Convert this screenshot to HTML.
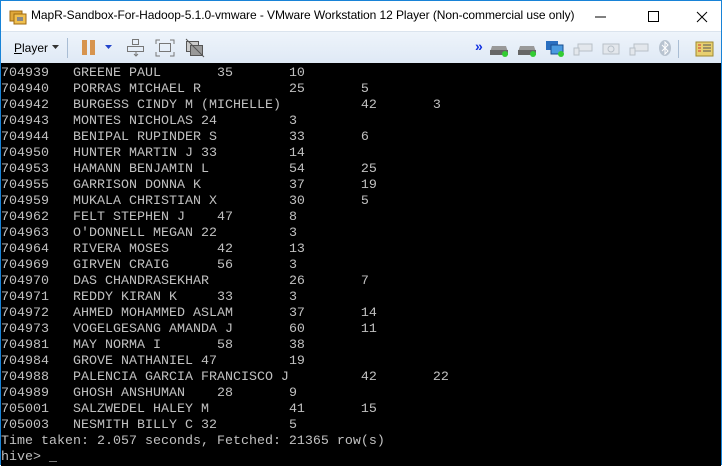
<!DOCTYPE html>
<html><head><meta charset="utf-8">
<style>
html,body{margin:0;padding:0;width:722px;height:466px;overflow:hidden;background:#fff;font-family:"Liberation Sans",sans-serif;}
.win{position:absolute;left:0;top:0;width:720px;height:465px;border:1px solid #1883d7;border-top:none;border-bottom:none;}
.title{position:absolute;left:0;top:0;width:722px;height:31px;background:#fff;border-top:1px solid #1883d7;box-sizing:border-box;}
.title .t{position:absolute;left:31px;top:7px;font-size:12px;letter-spacing:-0.07px;color:#000;}
.tb{position:absolute;left:1px;top:31px;width:720px;height:32px;background:linear-gradient(#eef4fb,#dfe9f5);border-top:1px solid #dbe4ee;box-sizing:border-box;}
.con{position:absolute;left:1px;top:63px;width:720px;height:403px;background:#000;}
pre{margin:0;position:absolute;left:0;top:3px;font-family:"Liberation Mono",monospace;font-size:13.333px;line-height:16px;color:#c0c0c0;tab-size:9;-moz-tab-size:9;}
.ic{position:absolute;}
</style></head><body>
<div class="title">
  <svg class="ic" style="left:9px;top:8px" width="18" height="16" viewBox="0 0 18 16">
    <rect x="1" y="2" width="12" height="10" fill="#e0a83a" stroke="#a06a10"/>
    <rect x="5" y="5" width="12" height="10" fill="#f0c050" stroke="#a06a10"/>
    <rect x="8" y="8" width="6" height="4" fill="#888"/>
  </svg>
  <div class="t">MapR-Sandbox-For-Hadoop-5.1.0-vmware - VMware Workstation 12 Player (Non-commercial use only)</div>
  <svg class="ic" style="left:595px;top:9px" width="120" height="14" viewBox="0 0 120 14">
    <line x1="0" y1="7" x2="11" y2="7" stroke="#000"/>
    <rect x="53.5" y="1.5" width="10" height="10" fill="none" stroke="#000"/>
    <path d="M102 2 L112 12 M112 2 L102 12" stroke="#000"/>
  </svg>
</div>
<div class="tb">
  <div style="position:absolute;left:13px;top:9px;font-size:12px;color:#000"><u>P</u>layer</div>
  <svg class="ic" style="left:51px;top:13px" width="8" height="5"><path d="M0 0H7L3.5 4Z" fill="#333"/></svg>
  <div style="position:absolute;left:66px;top:6px;width:1px;height:20px;background:#a9bdd4"></div>
  <div style="position:absolute;left:81px;top:8px;width:5px;height:15px;background:#d7944e"></div>
  <div style="position:absolute;left:89px;top:8px;width:5px;height:15px;background:#d7944e"></div>
  <svg class="ic" style="left:104px;top:13px" width="8" height="5"><path d="M0 0H7L3.5 4Z" fill="#2244cc"/></svg>
  <svg class="ic" style="left:125px;top:6px" width="20" height="20" viewBox="0 0 20 20" fill="none" stroke="#777">
    <rect x="6.5" y="1.5" width="6" height="5"/><rect x="1.5" y="8.5" width="16" height="5"/><path d="M10 14v4M8 16l2 2 2-2"/>
  </svg>
  <svg class="ic" style="left:154px;top:7px" width="20" height="18" viewBox="0 0 20 18" fill="none" stroke="#777">
    <rect x="4.5" y="4.5" width="11" height="8"/><path d="M1 5V1H5M15 1H19V5M1 13V17H5M15 17H19V13"/>
  </svg>
  <svg class="ic" style="left:184px;top:6px" width="20" height="20" viewBox="0 0 20 20" fill="none" stroke="#555">
    <rect x="1.5" y="3.5" width="12" height="10" fill="#ccc"/><rect x="5.5" y="7.5" width="12" height="10" fill="#999"/><path d="M1 1L19 19"/>
  </svg>
  <div style="position:absolute;left:474px;top:6px;font-size:14px;color:#1030e0;font-weight:bold">»</div>
  <svg class="ic" style="left:489px;top:8px" width="230" height="18" viewBox="0 0 230 18">
    <g><path d="M2 6h14l2 6H0z" fill="#999"/><rect x="0" y="10" width="18" height="5" fill="#666"/><circle cx="15" cy="14" r="3" fill="#3c3"/></g>
    <g transform="translate(28,0)"><path d="M2 6h14l2 6H0z" fill="#999"/><rect x="0" y="10" width="18" height="5" fill="#666"/><circle cx="15" cy="14" r="3" fill="#3c3"/></g>
    <g transform="translate(56,0)"><rect x="0" y="1" width="12" height="9" fill="#2a6fc0"/><rect x="5" y="5" width="12" height="9" fill="#4a9ae0" stroke="#1a4f90"/><circle cx="15" cy="14" r="3" fill="#3c3"/></g>
    <g transform="translate(84,0)" fill="#e3e7ec" stroke="#b8c0c8"><rect x="4" y="4" width="14" height="7"/><rect x="0" y="8" width="5" height="7"/></g>
    <g transform="translate(112,0)" fill="#e3e7ec" stroke="#b8c0c8"><rect x="1" y="4" width="16" height="10"/><circle cx="9" cy="9" r="3"/></g>
    <g transform="translate(140,0)" fill="#e3e7ec" stroke="#b8c0c8"><rect x="4" y="4" width="14" height="7"/><rect x="0" y="8" width="5" height="7"/></g>
    <g transform="translate(168,0)"><ellipse cx="7" cy="8" rx="6" ry="8" fill="#b8c3d0"/><path d="M4 5l6 6-3 3V2l3 3-6 6" stroke="#fff" fill="none"/></g>
    <rect x="188" y="0" width="1" height="18" fill="#a9bdd4"/>
    <g transform="translate(206,0)"><rect x="0" y="2" width="17" height="14" fill="#e8d070" stroke="#a08a30"/><path d="M2 5h3M2 8h3M2 11h3" stroke="#c33"/><path d="M7 5h8M7 8h8M7 11h8" stroke="#555"/></g>
  </svg>
</div>
<div class="con"><pre>704939	GREENE PAUL	35	10
704940	PORRAS MICHAEL R		25	5
704942	BURGESS CINDY M (MICHELLE)		42	3
704943	MONTES NICHOLAS 24	3
704944	BENIPAL RUPINDER S	33	6
704950	HUNTER MARTIN J 33	14
704953	HAMANN BENJAMIN L		54	25
704955	GARRISON DONNA K		37	19
704959	MUKALA CHRISTIAN X	30	5
704962	FELT STEPHEN J	47	8
704963	O'DONNELL MEGAN 22	3
704964	RIVERA MOSES	42	13
704969	GIRVEN CRAIG	56	3
704970	DAS CHANDRASEKHAR		26	7
704971	REDDY KIRAN K	33	3
704972	AHMED MOHAMMED ASLAM	37	14
704973	VOGELGESANG AMANDA J	60	11
704981	MAY NORMA I	58	38
704984	GROVE NATHANIEL 47	19
704988	PALENCIA GARCIA FRANCISCO J	42	22
704989	GHOSH ANSHUMAN	28	9
705001	SALZWEDEL HALEY M		41	15
705003	NESMITH BILLY C 32	5
Time taken: 2.057 seconds, Fetched: 21365 row(s)
hive&gt; _</pre></div>
<div class="win"></div>
</body></html>
